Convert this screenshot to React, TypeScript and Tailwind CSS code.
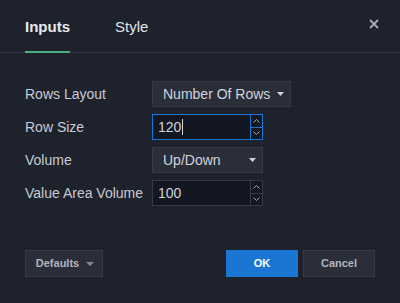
import React from 'react';

const Caret = ({ className = '', w = 8 }: { className?: string; w?: number }) => (
  <svg width={w} height="4" viewBox={`0 0 ${w} 4`} className={className}>
    <path d={`M0 0h${w}L${w / 2} 4z`} fill="currentColor" />
  </svg>
);

const Spinner = ({ active }: { active?: boolean }) => (
  <div className={`flex w-[12px] flex-col border-l ${active ? 'border-[#1976d2]' : 'border-[#363a45]'}`}>
    <div className={`flex flex-1 items-center justify-center border-b ${active ? 'border-[#1976d2]' : 'border-[#363a45]'}`}>
      <svg width="7" height="4" viewBox="0 0 7 4"><path d="M0.5 3.5L3.5 0.5L6.5 3.5" stroke="#a3a6af" fill="none" /></svg>
    </div>
    <div className="flex flex-1 items-center justify-center">
      <svg width="7" height="4" viewBox="0 0 7 4"><path d="M0.5 0.5L3.5 3.5L6.5 0.5" stroke="#a3a6af" fill="none" /></svg>
    </div>
  </div>
);

const NumberField = ({ value, focused }: { value: string; focused?: boolean }) => (
  <div className={`flex h-[26px] w-[111px] border bg-[#131722] ${focused ? 'border-[#1976d2]' : 'border-[#363a45]'}`}>
    <div className="flex flex-1 items-center pl-[5px] text-[14px] text-[#d1d4dc]">
      {value}
      {focused && <span className="ml-px h-[16px] w-px bg-[#d1d4dc]" />}
    </div>
    <Spinner active={focused} />
  </div>
);

const Select = ({ value, width }: { value: string; width: string }) => (
  <div className={`flex h-[26px] ${width} items-center justify-between border border-[#363a45] bg-[#2a2e39] pl-[10px] pr-[6px] text-[14px] text-[#d1d4dc]`}>
    <span>{value}</span>
    <Caret w={7} className="text-[#d1d4dc]" />
  </div>
);

export default function App() {
  return (
    <div className="flex h-[303px] w-[400px] flex-col bg-[#1e222d] font-['Liberation_Sans',Arial,sans-serif] text-[#d1d4dc]">
      <div className="flex h-[53px] items-center border-b border-[#363a45] px-[25px]">
        <div className="relative flex h-full items-center pt-[2px] text-[15px] font-bold text-[#e8e9ed]">
          Inputs
          <div className="absolute bottom-[-1px] left-0 right-0 h-[2px] bg-[#4caf82]" />
        </div>
        <div className="ml-[45px] flex h-full items-center pt-[2px] text-[15px] text-[#e0e2e8]">Style</div>
        <div className="ml-auto mr-[-4px] -mt-[5px] text-[#a3a6af]">
          <svg width="10" height="10" viewBox="0 0 10 10">
            <path d="M1 1L9 9M9 1L1 9" stroke="currentColor" strokeWidth="2" />
          </svg>
        </div>
      </div>

      <div className="grid grid-cols-[127px_auto] items-center gap-y-[7px] px-[25px] pt-[28px] text-[14px]">
        <div className="text-[#c8cbd3]">Rows Layout</div>
        <Select value="Number Of Rows" width="w-[139px]" />
        <div className="text-[#c8cbd3]">Row Size</div>
        <NumberField value="120" focused />
        <div className="text-[#c8cbd3]">Volume</div>
        <Select value="Up/Down" width="w-[111px]" />
        <div className="text-[#c8cbd3]">Value Area Volume</div>
        <NumberField value="100" />
      </div>

      <div className="mt-[44px] flex items-center px-[25px] text-[11px] font-bold">
        <button className="flex h-[27px] w-[78px] items-center justify-center gap-[7px] border border-[#363a45] bg-[#2a2e39] pl-[2px] text-[#b2b5be]">
          Defaults
          <Caret className="text-[#868993]" />
        </button>
        <button className="ml-auto h-[27px] w-[72px] bg-[#1976d2] text-white">OK</button>
        <button className="ml-[5px] h-[27px] w-[72px] border border-[#363a45] bg-[#2a2e39] text-[#b2b5be]">Cancel</button>
      </div>
    </div>
  );
}
